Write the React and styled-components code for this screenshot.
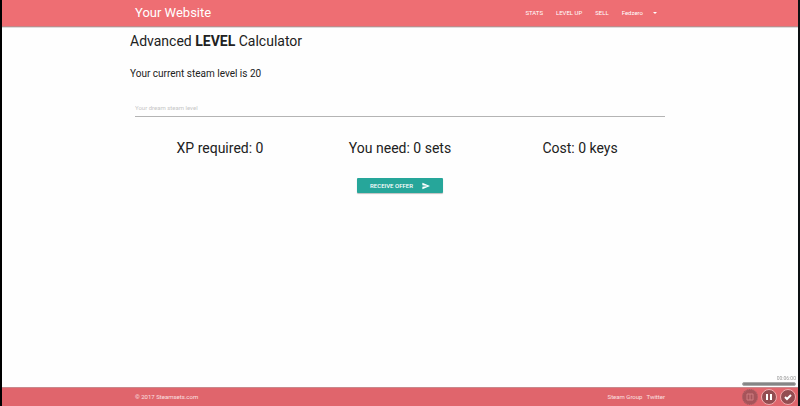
import React from "react";
import styled, { createGlobalStyle } from "styled-components";

const GlobalStyle = createGlobalStyle`
  *, *::before, *::after { box-sizing: border-box; }
  body {
    margin: 0;
    background: #fefefe;
    color: #212121;
    font-family: Roboto, "Liberation Sans", sans-serif;
  }
  h1, h2, p { margin: 0; font-weight: 400; }
  a { color: inherit; text-decoration: none; }
`;

const Page = styled.div`
  min-height: 100vh;
  display: flex;
  flex-direction: column;
  border-left: 2px solid #000;
  border-right: 2px solid #0c1012;
`;

const Container = styled.div`
  width: 90%;
  max-width: 540px;
  margin: 0 auto;
`;

const Header = styled.header`
  background: #ee6e73;
  color: #fff;
  border-bottom: 1px solid #c08a8a;
  box-shadow: 0 1px 0 #dcdcdc;
`;

const Bar = styled(Container)`
  display: flex;
  align-items: center;
  justify-content: space-between;
  height: ${(p) => p.$height}px;
  padding: 0 5px;
`;

const Brand = styled.a`
  font-size: 13px;
  line-height: 16px;
`;

const Nav = styled.nav`
  display: flex;
  align-items: center;
  gap: 13px;
  padding-right: 8px;
  font-size: 6px;
  line-height: 8px;
`;

const AccountButton = styled.button`
  display: flex;
  align-items: center;
  gap: 10px;
  padding: 0;
  border: 0;
  background: none;
  color: inherit;
  font: inherit;
  cursor: pointer;
`;

const Caret = styled.svg`
  width: 4px;
  height: 2px;
  fill: currentColor;
`;

const Main = styled.main`
  flex: 1;
`;

const Title = styled.h1`
  padding-top: 5px;
  font-size: 14px;
  line-height: 18px;
`;

const Subtitle = styled.h2`
  margin-top: 17px;
  font-size: 10px;
  line-height: 14px;
`;

const Field = styled.label`
  display: block;
  margin-top: 17px;
  padding: 0 5px;
`;

const LevelInput = styled.input`
  display: block;
  width: 100%;
  height: 19px;
  padding: 0;
  border: 0;
  border-bottom: 1px solid #b4b4b4;
  outline: 0;
  background: transparent;
  color: #212121;
  font: 6px/8px Roboto, "Liberation Sans", sans-serif;
  &::placeholder { color: #c6c6c6; opacity: 1; }
`;

const Results = styled.section`
  display: grid;
  grid-template-columns: repeat(3, 1fr);
  margin-top: 22px;
  text-align: center;
`;

const Result = styled.p`
  font-size: 14px;
  line-height: 18px;
`;

const Actions = styled.div`
  display: flex;
  justify-content: center;
  margin-top: 21px;
`;

const OfferButton = styled.button`
  display: flex;
  align-items: center;
  gap: 9px;
  height: 15px;
  padding: 0 13px;
  border: 0;
  border-radius: 1px;
  background: #26a69a;
  box-shadow: 0 1px 1px rgba(0, 0, 0, 0.25);
  color: #fff;
  font: 500 6px/8px Roboto, "Liberation Sans", sans-serif;
  text-transform: uppercase;
  cursor: pointer;
`;

const SendIcon = styled.svg`
  width: 8px;
  height: 8px;
  fill: currentColor;
`;

const Footer = styled.footer`
  background: #e0656c;
  border-top: 1px solid #c9888c;
  color: #fbe0e1;
  font-size: 6px;
  line-height: 8px;
`;

const FooterLinks = styled.div`
  display: flex;
  gap: 4px;
`;

const Recorder = styled.aside`
  position: fixed;
  right: 4px;
  bottom: 1px;
  width: 54px;
`;

const Timer = styled.div`
  color: #999;
  font-size: 5px;
  line-height: 6px;
  text-align: right;
`;

const Track = styled.div`
  height: 4px;
  margin: 1px 0 3px;
  border: 1px solid #aaa;
  border-radius: 2px;
  background: #858585;
`;

const Controls = styled.div`
  display: flex;
  justify-content: space-between;
`;

const RoundButton = styled.button`
  width: 16px;
  height: 16px;
  padding: 0;
  border: 1px ${(p) => (p.$muted ? "dotted #b8686d" : "solid #efabad")};
  border-radius: 50%;
  background: ${(p) => (p.$muted ? "#a6545a" : "#934d51")};
  color: ${(p) => (p.$muted ? "#cf7c80" : "#fff")};
  cursor: pointer;

  svg {
    display: block;
    width: 14px;
    height: 14px;
    fill: none;
    stroke: currentColor;
    stroke-width: ${(p) => (p.$muted ? 1 : 2)};
  }
`;

const results = ["XP required: 0", "You need: 0 sets", "Cost: 0 keys"];

export default function App() {
  return (
    <>
      <GlobalStyle />
      <Page>
        <Header>
          <Bar $height={26}>
            <Brand href="#">Your Website</Brand>
            <Nav>
              <a href="#stats">STATS</a>
              <a href="#level-up">LEVEL UP</a>
              <a href="#sell">SELL</a>
              <AccountButton type="button">
                Fedzero
                <Caret viewBox="0 0 4 2" aria-hidden="true">
                  <path d="M0 0h4L2 2z" />
                </Caret>
              </AccountButton>
            </Nav>
          </Bar>
        </Header>
        <Main>
          <Container>
            <Title>
              Advanced <strong>LEVEL</strong> Calculator
            </Title>
            <Subtitle>Your current steam level is 20</Subtitle>
            <Field>
              <LevelInput
                type="text"
                aria-label="Your dream steam level"
                placeholder="Your dream steam level"
              />
            </Field>
            <Results>
              {results.map((text) => (
                <Result key={text}>{text}</Result>
              ))}
            </Results>
            <Actions>
              <OfferButton type="button">
                Receive offer
                <SendIcon viewBox="1 2 22 20" aria-hidden="true">
                  <path d="M2.01 21L23 12 2.01 3 2 10l15 2-15 2z" />
                </SendIcon>
              </OfferButton>
            </Actions>
          </Container>
        </Main>
        <Footer>
          <Bar $height={18}>
            <span>© 2017 Steamsets.com</span>
            <FooterLinks>
              <a href="#group">Steam Group</a>
              <a href="#twitter">Twitter</a>
            </FooterLinks>
          </Bar>
        </Footer>
      </Page>
      <Recorder aria-label="Screen recorder">
        <Timer>00:06:00</Timer>
        <Track />
        <Controls>
          <RoundButton type="button" $muted aria-label="Stop">
            <svg viewBox="0 0 14 14">
              <path d="M4 4h6v6H4zM7 4v6" />
            </svg>
          </RoundButton>
          <RoundButton type="button" aria-label="Pause">
            <svg viewBox="0 0 14 14">
              <path d="M5 4v6M9 4v6" />
            </svg>
          </RoundButton>
          <RoundButton type="button" aria-label="Finish">
            <svg viewBox="0 0 14 14">
              <path d="M4 7l2 2 4-4" />
            </svg>
          </RoundButton>
        </Controls>
      </Recorder>
    </>
  );
}
